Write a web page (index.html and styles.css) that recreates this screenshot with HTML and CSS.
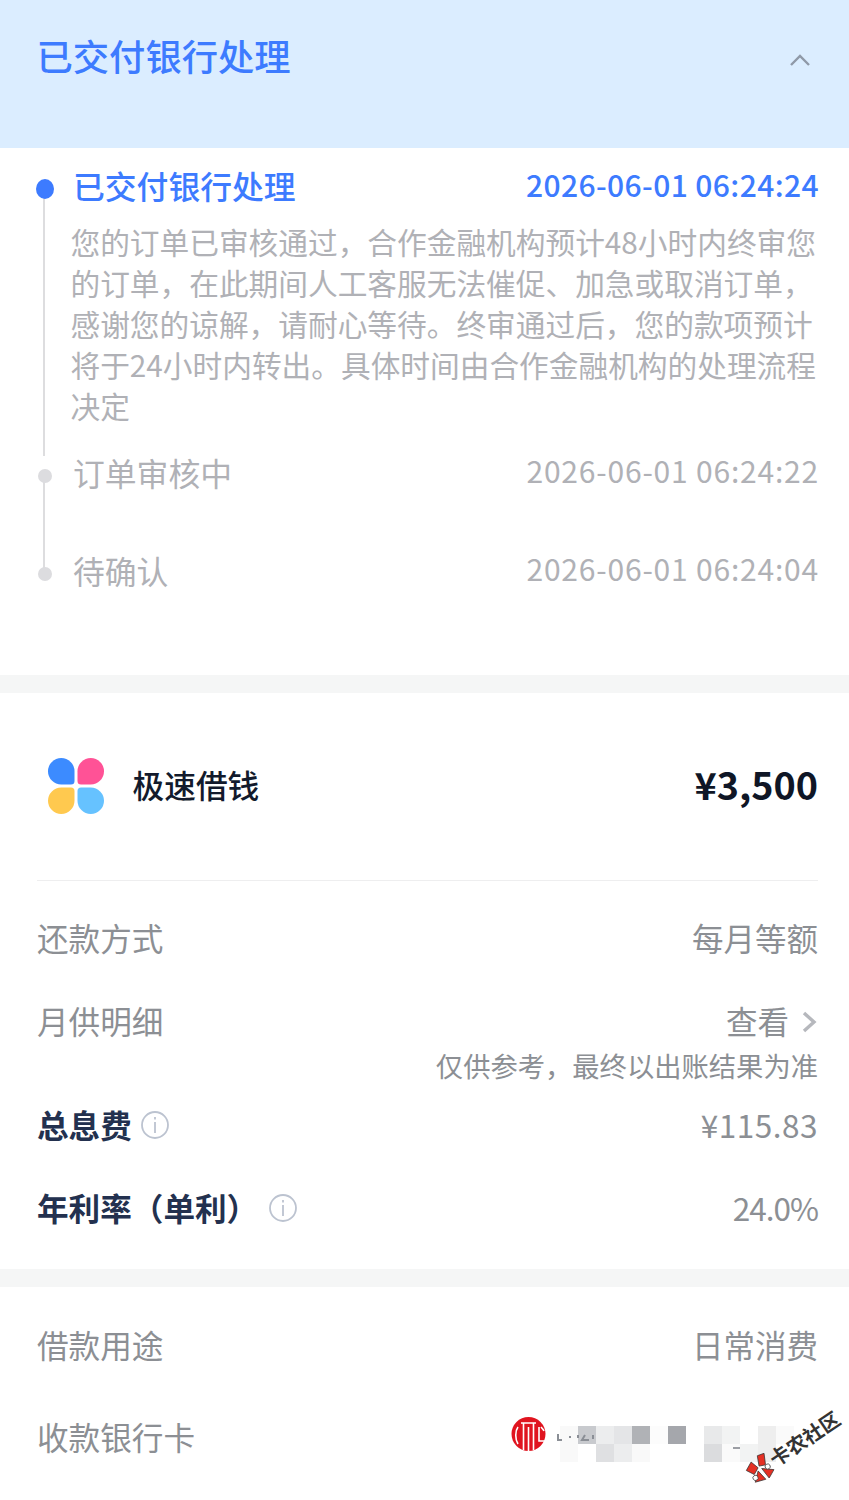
FILE: index.html
```html
<!DOCTYPE html>
<html lang="zh-CN">
<head>
<meta charset="utf-8">
<title>已交付银行处理</title>
<link rel="stylesheet" href="styles.css">
</head>
<body>
<div class="page">
  <header class="status-head">
    <h1 class="status-title">已交付银行处理</h1>
    <svg class="collapse" width="22" height="14" viewBox="0 0 22 14"><path d="M2 12 L11 3 L20 12" fill="none" stroke="#8f99a8" stroke-width="2.400"/></svg>
  </header>

  <section class="timeline">
    <div class="tl-item tl-active">
      <div class="tl-row">
        <span class="tl-dot"></span>
        <span class="tl-name">已交付银行处理</span>
        <span class="tl-time">2026-06-01 06:24:24</span>
      </div>
      <p class="tl-desc">您的订单已审核通过，合作金融机构预计48小时内终审您的订单，在此期间人工客服无法催促、加急或取消订单，感谢您的谅解，请耐心等待。终审通过后，您的款项预计将于24小时内转出。具体时间由合作金融机构的处理流程决定</p>
    </div>
    <div class="tl-item tl-mid">
      <div class="tl-row">
        <span class="tl-dot"></span>
        <span class="tl-name">订单审核中</span>
        <span class="tl-time">2026-06-01 06:24:22</span>
      </div>
    </div>
    <div class="tl-item tl-last">
      <div class="tl-row">
        <span class="tl-dot"></span>
        <span class="tl-name">待确认</span>
        <span class="tl-time">2026-06-01 06:24:04</span>
      </div>
    </div>
  </section>

  <section class="card product-card">
    <div class="product">
      <svg class="product-icon" width="56" height="56" viewBox="0 0 56 56">
        <path d="M13.250 0 A13.250 13.250 0 0 1 26.500 13.250 V23 A3.500 3.500 0 0 1 23 26.500 H13.250 A13.250 13.250 0 0 1 13.250 0 Z" fill="#3c8bff"/>
        <path d="M42.750 0 A13.250 13.250 0 0 1 42.750 26.500 H33 A3.500 3.500 0 0 1 29.500 23 V13.250 A13.250 13.250 0 0 1 42.750 0 Z" fill="#ff5296"/>
        <path d="M13.250 29.500 H23 A3.500 3.500 0 0 1 26.500 33 V42.750 A13.250 13.250 0 0 1 0 42.750 A13.250 13.250 0 0 1 13.250 29.500 Z" fill="#ffc94f"/>
        <path d="M33 29.500 H42.750 A13.250 13.250 0 0 1 42.750 56 A13.250 13.250 0 0 1 29.500 42.750 V33 A3.500 3.500 0 0 1 33 29.500 Z" fill="#66c2ff"/>
      </svg>
      <span class="product-name">极速借钱</span>
      <span class="product-amount">¥3,500</span>
    </div>
    <div class="rows">
      <div class="row row-plain">
        <span class="label">还款方式</span>
        <span class="value">每月等额</span>
      </div>
      <div class="row row-detail">
        <span class="label">月供明细</span>
        <span class="value value-link">查看
          <svg class="chevron" width="16" height="24" viewBox="0 0 16 24"><path d="M3 3 L13 12 L3 21" fill="none" stroke="#b6b8bd" stroke-width="3.400"/></svg>
        </span>
      </div>
      <div class="note">仅供参考，最终以出账结果为准</div>
      <div class="row row-strong row-fee">
        <span class="label-strong">总息费
          <svg class="info" width="28" height="28" viewBox="0 0 28 28"><circle cx="14" cy="14" r="13" fill="none" stroke="#bcc3d0" stroke-width="1.800"/><path d="M14 11 V22 M14 6 V8.500" stroke="#bcc3d0" stroke-width="1.800"/></svg>
        </span>
        <span class="value value-num">¥115.83</span>
      </div>
      <div class="row row-strong row-rate">
        <span class="label-strong">年利率（单利）
          <svg class="info info-wide" width="28" height="28" viewBox="0 0 28 28"><circle cx="14" cy="14" r="13" fill="none" stroke="#bcc3d0" stroke-width="1.800"/><path d="M14 11 V22 M14 6 V8.500" stroke="#bcc3d0" stroke-width="1.800"/></svg>
        </span>
        <span class="value value-rate">24.0%</span>
      </div>
    </div>
  </section>

  <section class="card purpose-card">
    <div class="row row-purpose">
      <span class="label">借款用途</span>
      <span class="value">日常消费</span>
    </div>
    <div class="row row-bank">
      <span class="label">收款银行卡</span>
      <span class="bank">
        <svg class="bank-logo" width="35" height="34" viewBox="0 0 35 34">
          <circle cx="17.500" cy="17" r="17" fill="#e0141f"/>
          <path d="M10 6 H25 M12.500 6 V33 M17.500 10 V34 M22.500 6 V33 M7 10 C4 14 4 22 7 27 M28 10 V24 H35 M30 10 C31 11 32 12 33 14" stroke="#fff" stroke-width="1.600" fill="none"/>
        </svg>
        <span class="mosaic">
          <i class="m-f9"></i><i class="m-c8"></i><i class="m-ec"></i><i class="m-e4"></i><i class="m-b0"></i><i class="m-fc"></i><i class="m-a5"></i><i></i><i class="m-e8"></i><i class="m-f2"></i><i></i><i class="m-ee"></i><i class="m-fa"></i>
          <i class="m-f9"></i><i></i><i class="m-df"></i><i class="m-ec"></i><i class="m-f9"></i><i></i><i></i><i></i><i class="m-db"></i><i class="m-fa"></i><i class="m-f2"></i><i class="m-ee"></i><i></i>
          <svg class="mosaic-marks" width="234" height="36" viewBox="0 0 234 36">
            <path d="M-2 8 V14 H2 M10 10 V12 M18 9 V12 M25 9 L22 14 H29 M33 9 V13" stroke="#8b8f96" stroke-width="2" fill="none"/>
            <path d="M173 22 H180" stroke="#9b9ea4" stroke-width="2" fill="none"/>
          </svg>
        </span>
      </span>
    </div>
  </section>

  <div class="watermark">
    <svg class="wm-logo" width="26" height="26" viewBox="0 0 30 30">
      <path d="M1 8 L11 3 L14 13 L6 17 Z M29 3 L21 1 L16 12 L23 15 Z M2 25 L12 16 L14 29 Z M28 25 L17 16 L18 30 Z" fill="#e53024" stroke="#333" stroke-width="0.800"/>
      <circle cx="5" cy="21" r="3" fill="#fff" stroke="#333" stroke-width="0.800"/>
      <circle cx="24" cy="18" r="3" fill="#fff" stroke="#333" stroke-width="0.800"/>
    </svg>
    <span class="wm-text">卡农社区</span>
  </div>
</div>
</body>
</html>
```

FILE: styles.css
```css
* { box-sizing: border-box; }
html, body { margin: 0; padding: 0; background: #fff; }
body { font-family: "Noto Sans CJK SC", "Noto Sans", sans-serif; overflow: hidden; }
.page { position: relative; width: 849px; height: 1500px; overflow: hidden; background: #f5f6f6; }

.status-head { height: 148px; background: #dbedff; display: flex; justify-content: space-between; padding: 31px 38px 0 36.500px; align-items: flex-start; }
.status-title { margin: 0; font-size: 36.300px; line-height: 48px; font-weight: 500; color: #3d7bff; }
.collapse { margin-top: 22px; }

.timeline { height: 527px; background: #fff; padding: 19px 31px 0 36px; position: relative; }
.tl-item { position: relative; }
.tl-row { display: flex; align-items: center; height: 40px; }
.tl-item::before { content: ""; position: absolute; left: 7px; width: 2px; background: #dddddf; }
.tl-active::before { top: 20px; bottom: -30px; }
.tl-mid::before { top: 20px; bottom: -78px; }
.tl-last::before { display: none; }
.tl-dot { position: relative; flex: none; width: 14px; height: 14px; margin: 0 21px 0 2px; border-radius: 50%; background: #dcdcdf; }
.tl-name { flex: 1; font-size: 31.800px; line-height: 40px; padding-bottom: 8px; color: #b0b1b6; }
.tl-time { font-size: 30px; line-height: 40px; padding-bottom: 12px; color: #b0b1b6; letter-spacing: 0.800px; margin-right: -1px; white-space: nowrap; }
.tl-active .tl-dot { width: 18px; height: 20px; margin: 4px 19px 0 0; background: #3d7bff; }
.tl-active .tl-name { padding-bottom: 4px; color: #3d7bff; font-weight: 500; }
.tl-active .tl-time { padding-bottom: 6px; color: #3d7bff; font-weight: 500; letter-spacing: 0.400px; }
.tl-desc { margin: 14px 0 0 34.500px; font-size: 29.700px; line-height: 41px; color: #b0b1b6; }
.tl-mid { margin-top: 30px; }
.tl-last { margin-top: 58px; }

.card { background: #fff; }
.product-card { margin-top: 18px; height: 576px; padding: 0 31px 0 37px; }
.product { height: 188px; display: flex; align-items: center; border-bottom: 1px solid #eeeeef; padding: 0 0 2px 11px; }
.product-icon { flex: none; margin-right: 28.500px; }
.product-name { flex: 1; font-size: 31.700px; font-weight: 500; padding-bottom: 4px; color: #121a2c; }
.product-amount { font-size: 37.700px; font-weight: 700; padding-bottom: 4px; color: #0f1626; }

.row { display: flex; justify-content: space-between; align-items: center; }
.label { font-size: 31.600px; line-height: 44px; color: #8c8f94; }
.value { font-size: 31.500px; line-height: 44px; color: #8c8f94; }
.value-num { letter-spacing: 0.500px; }
.value-rate { letter-spacing: -1px; }
.value-link { display: flex; align-items: center; }
.chevron { margin: 4px 1px 0 12px; }
.row-plain { margin-top: 34px; }
.row-detail { margin-top: 39px; }
.note { margin-top: 3px; text-align: right; font-size: 27.300px; line-height: 40px; color: #8c8f94; }
.label-strong { display: flex; align-items: center; font-size: 31.600px; line-height: 44px; font-weight: 700; color: #23314f; }
.info { margin-left: 9px; margin-top: 2px; }
.info-wide { margin-left: 11px; }
.row-fee { margin-top: 17px; }
.row-rate { margin-top: 39px; }

.purpose-card { margin-top: 18px; height: 213px; padding: 35px 31px 0 37px; }
.row-bank { margin-top: 48px; align-items: flex-start; }
.bank { display: flex; align-items: flex-start; margin-top: 3px; margin-right: 24px; }
.bank-logo { flex: none; margin-right: 14px; }
.mosaic { position: relative; display: grid; grid-template-columns: repeat(13, 18px); grid-auto-rows: 18px; margin-top: 9px; }
.mosaic-marks { position: absolute; left: 0; top: 0; overflow: visible; }
.m-a5 { background: #a5a7ac; }
.m-b0 { background: #b0b2b6; }
.m-c8 { background: #c8cace; }
.m-db { background: #dbdcde; }
.m-df { background: #dfe0e2; }
.m-e4 { background: #e4e5e7; }
.m-e8 { background: #e8e9ea; }
.m-ec { background: #ecedee; }
.m-ee { background: #eeeeee; }
.m-f2 { background: #f2f3f3; }
.m-f9 { background: #f9f9f9; }
.m-fa { background: #fafafa; }
.m-fc { background: #fcfcfc; }

.watermark { position: absolute; left: 749px; top: 1462px; display: flex; align-items: center; transform: rotate(-34deg); transform-origin: left center; }
.wm-logo { flex: none; }
.wm-text { margin-left: 1px; font-size: 20px; line-height: 28px; font-weight: 700; color: #333; white-space: nowrap; }
```
